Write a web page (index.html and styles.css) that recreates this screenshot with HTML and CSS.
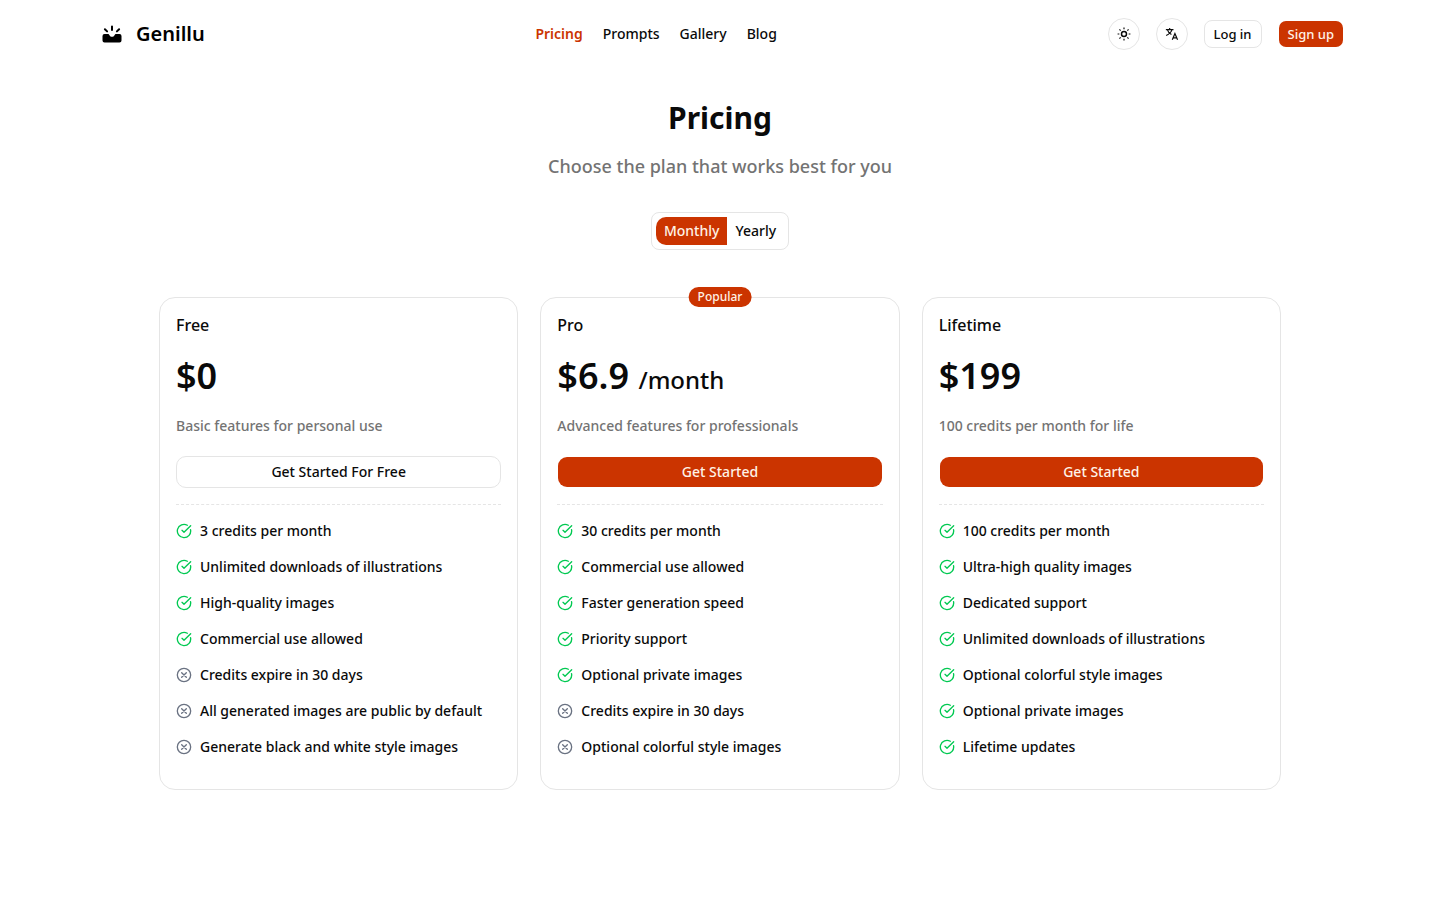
FILE: index.html
```
<!DOCTYPE html>
<html lang="en">
<head>
<meta charset="utf-8">
<meta name="viewport" content="width=device-width, initial-scale=1">
<title>Pricing - Genillu</title>
<link rel="stylesheet" href="styles.css">
</head>
<body>
<svg class="sprite" aria-hidden="true">
  <symbol id="check" viewBox="0 0 24 24"><path d="M21.8 10A10 10 0 1 1 17 3.34"/><path d="m9 11 3 3L22 4"/></symbol>
  <symbol id="cross" viewBox="0 0 24 24"><circle cx="12" cy="12" r="10"/><path d="m15.500 8.500-7 7M8.500 8.500l7 7"/></symbol>
</svg>
<header class="header">
  <a class="brand" href="#">
    <svg class="brand-icon" viewBox="0 0 24 24" aria-hidden="true">
      <path fill="currentColor" d="M4.500 12h3.200c1 0 1.300.5 1.800 1.300.6 1 1.400 1.500 2.500 1.500s1.900-.5 2.500-1.500c.5-.8.800-1.300 1.800-1.300h3.200a2 2 0 0 1 2 2v4.500a2 2 0 0 1-2 2h-15a2 2 0 0 1-2-2v-4.500a2 2 0 0 1 2-2Z"/>
      <path fill="none" stroke="currentColor" stroke-width="2" stroke-linecap="round" d="M12 4.500v3.500M4.900 7.200l2.200 2.200M19.100 7.200l-2.200 2.200"/>
    </svg>
    <span>Genillu</span>
  </a>
  <nav class="nav" aria-label="Main">
    <a class="active" href="#" aria-current="page">Pricing</a>
    <a href="#">Prompts</a>
    <a href="#">Gallery</a>
    <a href="#">Blog</a>
  </nav>
  <div class="actions">
    <button class="round" type="button" aria-label="Toggle theme">
      <svg viewBox="0 0 24 24" aria-hidden="true"><circle cx="12" cy="12" r="4.300" stroke-width="2.500"/><path d="M12 1v3M12 20v3M1 12h3M20 12h3M4.200 4.200l2 2M17.800 17.800l2 2M4.200 19.800l2-2M17.800 6.200l2-2"/></svg>
    </button>
    <button class="round" type="button" aria-label="Change language">
      <svg viewBox="0 0 24 24" aria-hidden="true"><path d="M1.500 4.500h13M8 1.500v3M12 4.500C10.500 9 6.500 12.500 2 14.500M4 4.500c1 3.500 3.500 6.500 7 8.500M12.500 22l4.500-11 4.500 11M14 18.500h6"/></svg>
    </button>
    <a class="small-btn outline" href="#">Log in</a>
    <a class="small-btn solid" href="#">Sign up</a>
  </div>
</header>
<main class="main">
  <h1>Pricing</h1>
  <p class="lead">Choose the plan that works best for you</p>
  <div class="toggle" role="group" aria-label="Billing period">
    <button class="on" type="button" aria-pressed="true">Monthly</button>
    <button type="button" aria-pressed="false">Yearly</button>
  </div>
  <div class="plans">
    <section class="card">
      <h2>Free</h2>
      <p class="price">$0</p>
      <p class="desc">Basic features for personal use</p>
      <button class="cta outline" type="button">Get Started For Free</button>
      <ul>
        <li><svg class="yes"><use href="#check"/></svg>3 credits per month</li>
        <li><svg class="yes"><use href="#check"/></svg>Unlimited downloads of illustrations</li>
        <li><svg class="yes"><use href="#check"/></svg>High-quality images</li>
        <li><svg class="yes"><use href="#check"/></svg>Commercial use allowed</li>
        <li><svg class="no"><use href="#cross"/></svg>Credits expire in 30 days</li>
        <li><svg class="no"><use href="#cross"/></svg>All generated images are public by default</li>
        <li><svg class="no"><use href="#cross"/></svg>Generate black and white style images</li>
      </ul>
    </section>
    <section class="card">
      <span class="badge">Popular</span>
      <h2>Pro</h2>
      <p class="price">$6.9 <span class="per">/month</span></p>
      <p class="desc">Advanced features for professionals</p>
      <button class="cta solid" type="button">Get Started</button>
      <ul>
        <li><svg class="yes"><use href="#check"/></svg>30 credits per month</li>
        <li><svg class="yes"><use href="#check"/></svg>Commercial use allowed</li>
        <li><svg class="yes"><use href="#check"/></svg>Faster generation speed</li>
        <li><svg class="yes"><use href="#check"/></svg>Priority support</li>
        <li><svg class="yes"><use href="#check"/></svg>Optional private images</li>
        <li><svg class="no"><use href="#cross"/></svg>Credits expire in 30 days</li>
        <li><svg class="no"><use href="#cross"/></svg>Optional colorful style images</li>
      </ul>
    </section>
    <section class="card">
      <h2>Lifetime</h2>
      <p class="price">$199</p>
      <p class="desc">100 credits per month for life</p>
      <button class="cta solid" type="button">Get Started</button>
      <ul>
        <li><svg class="yes"><use href="#check"/></svg>100 credits per month</li>
        <li><svg class="yes"><use href="#check"/></svg>Ultra-high quality images</li>
        <li><svg class="yes"><use href="#check"/></svg>Dedicated support</li>
        <li><svg class="yes"><use href="#check"/></svg>Unlimited downloads of illustrations</li>
        <li><svg class="yes"><use href="#check"/></svg>Optional colorful style images</li>
        <li><svg class="yes"><use href="#check"/></svg>Optional private images</li>
        <li><svg class="yes"><use href="#check"/></svg>Lifetime updates</li>
      </ul>
    </section>
  </div>
</main>
</body>
</html>
```
FILE: styles.css
```
* { box-sizing: border-box; }
body {
  margin: 0;
  background: #fff;
  color: #0a0a0a;
  font: 500 14px/20px "Noto Sans", sans-serif;
}
h1, h2, p, ul { margin: 0; padding: 0; }
a { color: inherit; text-decoration: none; }
button { font: inherit; color: inherit; cursor: pointer; }
.sprite { display: none; }

.header {
  display: flex;
  justify-content: space-between;
  align-items: center;
  padding: 18px 96px 18px 100px;
}
.brand {
  display: flex;
  align-items: center;
  gap: 12px;
  color: #000;
  font-size: 20px;
  line-height: 28px;
  font-weight: 600;
}
.brand-icon { width: 24px; height: 24px; }
.nav { display: flex; gap: 20px; }
.nav .active { color: #cb3400; font-weight: 600; }
.actions {
  display: flex;
  justify-content: flex-end;
  align-items: center;
  gap: 16px;
}
.round {
  display: grid;
  place-items: center;
  width: 32px;
  height: 32px;
  padding: 0;
  background: #fff;
  border: 1px solid #e5e5e5;
  border-radius: 50%;
}
.round svg {
  width: 14px;
  height: 14px;
  fill: none;
  stroke: currentColor;
  stroke-width: 2;
}
.small-btn {
  padding: 3px 9px;
  font-size: 13px;
  border-radius: 8px;
}
.outline { background: #fff; border: 1px solid #e5e5e5; color: #0a0a0a; }
.solid {
  background: #cb3400;
  background-clip: padding-box;
  border: 1px solid transparent;
  color: #fff2e6;
}

.main {
  display: flex;
  flex-direction: column;
  align-items: center;
  padding: 32px 16px 48px;
}
h1 { font-size: 30px; line-height: 36px; font-weight: 700; }
.lead { margin-top: 16px; font-size: 18px; line-height: 28px; color: #737373; }
.toggle {
  display: flex;
  margin-top: 32px;
  padding: 4px;
  border: 1px solid #e5e5e5;
  border-radius: 8px;
}
.toggle button { padding: 4px 8px; border: 0; background: none; }
.toggle .on { background: #cb3400; color: #fff2e6; border-radius: 10px 0 0 10px; }

.plans {
  display: grid;
  grid-template-columns: repeat(3, 1fr);
  gap: 22px;
  width: 100%;
  max-width: 1122px;
  margin-top: 47px;
}
.card {
  position: relative;
  padding: 16px 16px 32px;
  border: 1px solid #e5e5e5;
  border-radius: 16px;
}
.badge {
  position: absolute;
  top: -11px;
  left: 50%;
  transform: translateX(-50%);
  padding: 2px 9px;
  font-size: 12px;
  line-height: 16px;
  color: #fff2e6;
  background: #cb3400;
  border-radius: 10px;
}
h2 { font-size: 16px; line-height: 22px; font-weight: 500; }
.price { margin-top: 18px; font-size: 36px; line-height: 44px; font-weight: 600; }
.per { font-size: 24px; line-height: 32px; font-weight: 500; }
.desc { margin-top: 18px; color: #737373; }
.cta {
  display: block;
  width: 100%;
  margin-top: 20px;
  padding: 5px 16px;
  border-radius: 10px;
}
.card ul {
  display: grid;
  gap: 16px;
  margin-top: 16px;
  padding-top: 16px;
  border-top: 1px dashed #e5e5e5;
  list-style: none;
}
li { display: flex; align-items: center; gap: 8px; }
li svg {
  flex: none;
  width: 16px;
  height: 16px;
  fill: none;
  stroke-width: 2;
  stroke-linecap: round;
  stroke-linejoin: round;
}
.yes { stroke: #00c951; }
.no { stroke: #6a7282; }

@media (max-width: 900px) {
  .header { flex-direction: column; padding: 16px; gap: 16px; }
  .plans { grid-template-columns: 1fr; }
}
```
